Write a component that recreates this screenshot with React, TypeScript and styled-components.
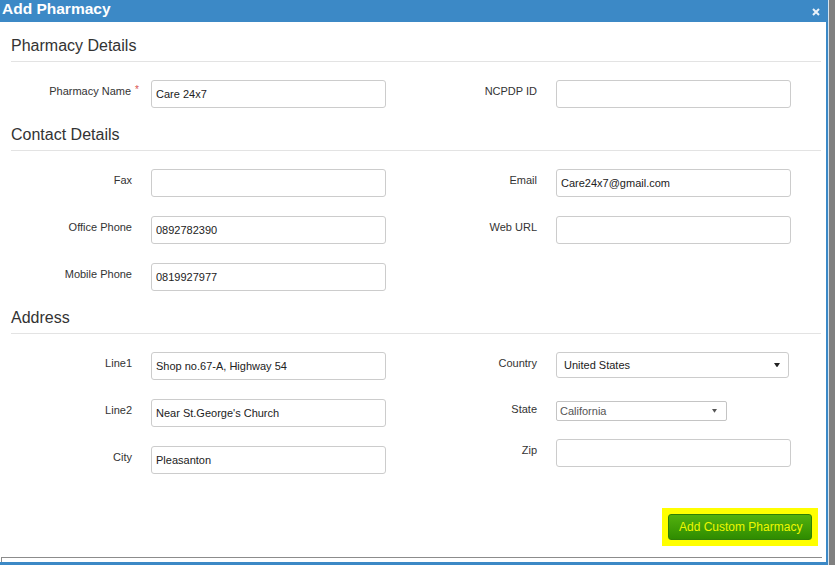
import React from "react";
import styled, { createGlobalStyle } from "styled-components";

const Global = createGlobalStyle`
  html, body { margin: 0; padding: 0; }
  body {
    background: #808080;
    font-family: "Liberation Sans", Arial, sans-serif;
    color: #333;
  }
`;

const Screen = styled.div`
  width: 835px;
  height: 565px;
  display: flex;
  overflow: hidden;
`;

const Dialog = styled.div`
  width: 828px;
  height: 565px;
  box-sizing: border-box;
  background: #fff;
  border-right: 2px solid #3c89c6;
  border-bottom: 3px solid #3c89c6;
  box-shadow: 1px 0 0 #d6e4f0;
  display: flex;
  flex-direction: column;
`;

const TitleBar = styled.div`
  height: 22px;
  background: #3c89c6;
  display: flex;
  align-items: flex-start;
  justify-content: space-between;
  padding: 0 6px 0 2px;
`;

const Title = styled.div`
  font-size: 15.5px;
  line-height: 18px;
  font-weight: bold;
  color: #fff;
`;

const Close = styled.button`
  margin-top: 8px;
  padding: 0;
  border: 0;
  background: none;
  width: 8px;
  height: 8px;
  display: flex;
`;

const Body = styled.div`
  flex: 1;
  display: flex;
  flex-direction: column;
  padding: 14px 5px 0 11px;
`;

const Section = styled.section`
  & + & { margin-top: 17px; }
`;

const Heading = styled.h3`
  margin: 0 0 18px;
  font-size: 16px;
  line-height: 20px;
  font-weight: normal;
  color: #333;
  padding-bottom: 5px;
  border-bottom: 1px solid #e3e3e3;
`;

const Columns = styled.div`
  display: grid;
  grid-template-columns: 405px 405px;
`;

const Column = styled.div`
  display: flex;
  flex-direction: column;
  gap: 19px;
`;

const FieldRow = styled.div<{ $h?: number }>`
  display: grid;
  grid-template-columns: 140px 235px;
  align-items: start;
  height: ${(p) => (p.$h ? `${p.$h}px` : "auto")};
`;

const Label = styled.label<{ $pt?: number }>`
  text-align: right;
  padding-right: 19px;
  padding-top: ${(p) => (p.$pt ?? 3)}px;
  font-size: 11px;
  line-height: 16px;
  color: #333;
`;

const Req = styled.span`
  color: #d9534f;
  margin-left: 4px;
  margin-right: -7px;
  font-size: 10px;
  vertical-align: top;
  position: relative;
  top: -1px;
`;

const TextInput = styled.input`
  box-sizing: border-box;
  width: 235px;
  height: 28px;
  margin: 0;
  border: 1px solid #ccc;
  border-radius: 3px;
  padding: 0 4px;
  font-family: "Liberation Sans", Arial, sans-serif;
  font-size: 11px;
  color: #222;
  background: #fff;
  outline: none;
`;

const SelectBox = styled.div<{ $w: number; $h: number; $pl: number; $muted?: boolean }>`
  box-sizing: border-box;
  width: ${(p) => p.$w}px;
  height: ${(p) => p.$h}px;
  border: 1px solid ${(p) => (p.$muted ? "#c4c4c4" : "#ccc")};
  border-radius: ${(p) => (p.$muted ? 2 : 3)}px;
  padding: 0 ${(p) => (p.$muted ? 9 : 8)}px 0 ${(p) => p.$pl}px;
  display: flex;
  align-items: center;
  justify-content: space-between;
  font-size: 11px;
  color: ${(p) => (p.$muted ? "#555" : "#222")};
  background: #fff;
`;

const Actions = styled.div`
  margin-top: auto;
  margin-bottom: 11px;
  padding-right: 3px;
  display: flex;
  justify-content: flex-end;
`;

const Highlight = styled.div`
  background: #ffff00;
  padding: 6px;
  display: flex;
`;

const PrimaryButton = styled.button`
  box-sizing: border-box;
  height: 26px;
  width: 144px;
  padding: 0 10px;
  border: 1px solid #2f7f06;
  border-radius: 3px;
  background: linear-gradient(#52b10e, #2f8c00);
  color: #eef800;
  font-family: "Liberation Sans", Arial, sans-serif;
  font-size: 12px;
  white-space: nowrap;
`;

const Footer = styled.div`
  height: 5px;
  box-sizing: border-box;
  margin: 0 4px 0 1px;
  border-top: 1px solid #8c8c8c;
  border-left: 1px solid #8c8c8c;
`;

const Caret = ({ size, color }: { size: number; color: string }) => (
  <svg width={size} height={size * 0.75} viewBox="0 0 8 6" aria-hidden>
    <polygon points="0,0 8,0 4,6" fill={color} />
  </svg>
);

type FieldProps = {
  label: string;
  value?: string;
  required?: boolean;
};

const Field = ({ label, value, required }: FieldProps) => (
  <FieldRow>
    <Label>
      {label}
      {required && <Req>*</Req>}
    </Label>
    <TextInput defaultValue={value ?? ""} />
  </FieldRow>
);

export default function App() {
  return (
    <>
      <Global />
      <Screen>
        <Dialog>
          <TitleBar>
            <Title>Add Pharmacy</Title>
            <Close aria-label="close">
              <svg width="8" height="8" viewBox="0 0 8 8">
                <path d="M1 1 L7 7 M7 1 L1 7" stroke="#eaf2fa" strokeWidth="2" />
              </svg>
            </Close>
          </TitleBar>
          <Body>
            <Section>
              <Heading>Pharmacy Details</Heading>
              <Columns>
                <Column>
                  <Field label="Pharmacy Name" required value="Care 24x7" />
                </Column>
                <Column>
                  <Field label="NCPDP ID" />
                </Column>
              </Columns>
            </Section>
            <Section>
              <Heading>Contact Details</Heading>
              <Columns>
                <Column>
                  <Field label="Fax" />
                  <Field label="Office Phone" value="0892782390" />
                  <Field label="Mobile Phone" value="0819927977" />
                </Column>
                <Column>
                  <Field label="Email" value="Care24x7@gmail.com" />
                  <Field label="Web URL" />
                </Column>
              </Columns>
            </Section>
            <Section>
              <Heading>Address</Heading>
              <Columns>
                <Column>
                  <Field label="Line1" value="Shop no.67-A, Highway 54" />
                  <Field label="Line2" value="Near St.George's Church" />
                  <Field label="City" value="Pleasanton" />
                </Column>
                <Column>
                  <FieldRow $h={30}>
                    <Label>Country</Label>
                    <SelectBox $w={233} $h={26} $pl={7}>
                      <span>United States</span>
                      <Caret size={6} color="#222" />
                    </SelectBox>
                  </FieldRow>
                  <FieldRow $h={19}>
                    <Label $pt={0}>State</Label>
                    <SelectBox $w={171} $h={20} $pl={3} $muted>
                      <span>California</span>
                      <Caret size={5} color="#555" />
                    </SelectBox>
                  </FieldRow>
                  <Field label="Zip" />
                </Column>
              </Columns>
            </Section>
            <Actions>
              <Highlight>
                <PrimaryButton>Add Custom Pharmacy</PrimaryButton>
              </Highlight>
            </Actions>
          </Body>
          <Footer />
        </Dialog>
      </Screen>
    </>
  );
}
